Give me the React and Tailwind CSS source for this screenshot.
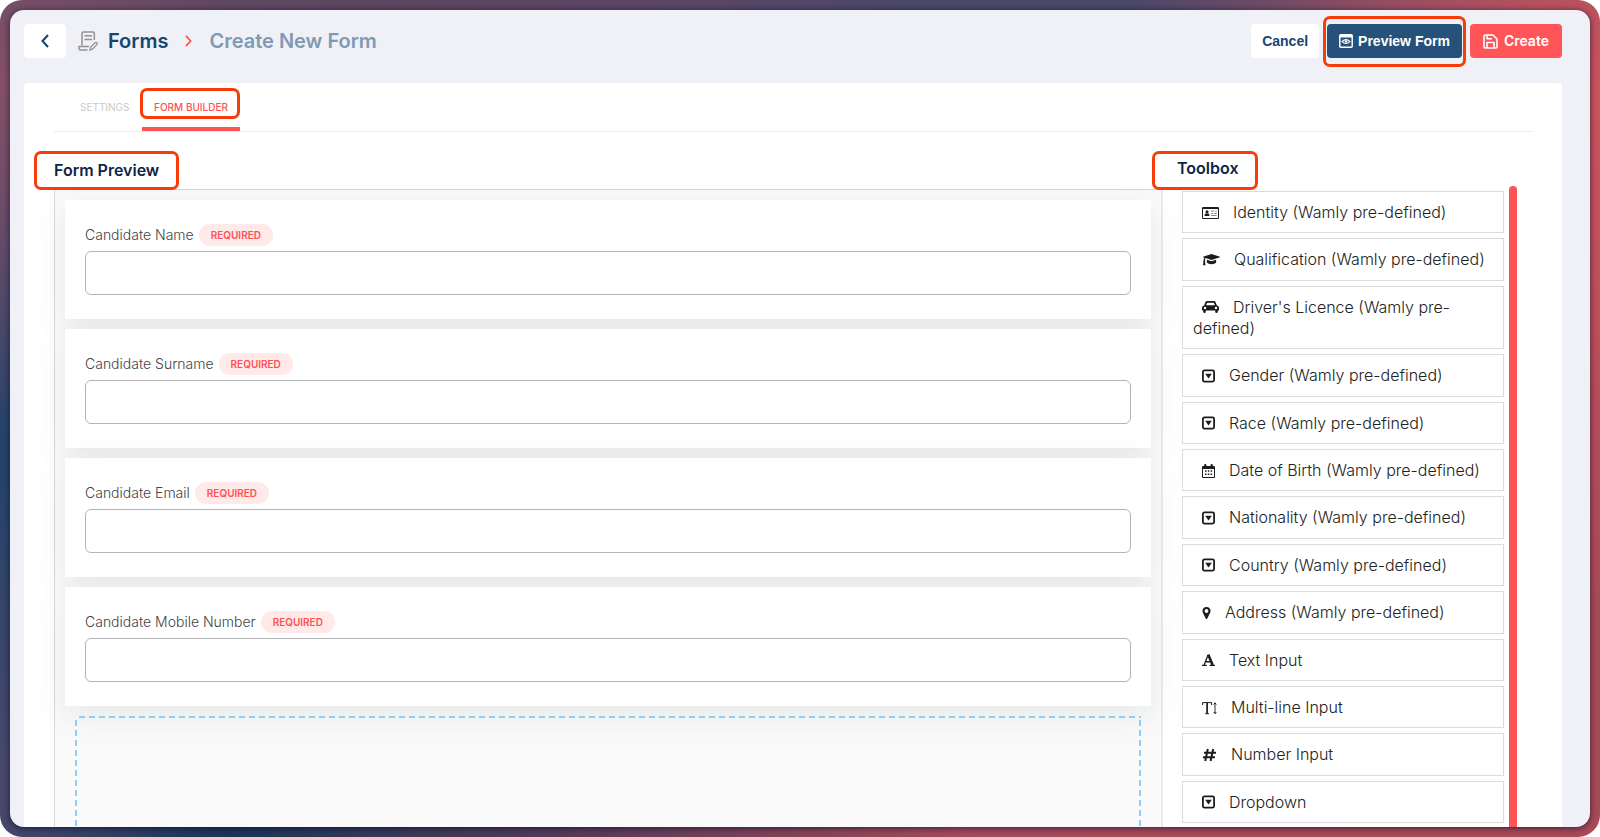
import { useState } from "react";

// ── Icons ─────────────────────────────────────────────────────────────────────

function FormIcon() {
  return (
    <svg className="w-5 h-5 text-[#929292]" viewBox="0 0 20 20" fill="none" stroke="currentColor" strokeWidth="1.5">
      <path d="M4 14.5V2.2Q4 1 5.2 1H15Q16.3 1 16.3 2.2V9" />
      <path d="M6.5 4.8H14M6.5 8.5H14" />
      <path d="M11 15.5H1V17.5Q1 19 2.5 19H9.5" />
      <path d="M12 19L12.6 16.2L17 11.8Q18 11 18.8 11.8Q19.6 12.6 18.8 13.6L14.5 18.2Z" strokeWidth="1.3" />
    </svg>
  );
}

function ChevronIcon({ flip, className }) {
  return (
    <svg className={className} viewBox="0 0 8 14" fill="none" stroke="currentColor" strokeWidth="2">
      <path d={flip ? "M7 1L1.5 7L7 13" : "M1 1L6.5 7L1 13"} />
    </svg>
  );
}

function PreviewIcon() {
  return (
    <svg className="w-[14px] h-[14px]" viewBox="0 0 14 14" fill="none" stroke="currentColor">
      <rect x="0.8" y="0.8" width="12.4" height="12.4" rx="1" strokeWidth="1.5" />
      <path d="M1 2.3H13" strokeWidth="2.4" />
      <path d="M3 7.6Q7 3.6 11 7.6Q7 11.4 3 7.6Z" strokeWidth="1.1" />
      <circle cx="7" cy="7.5" r="1.2" fill="currentColor" stroke="none" />
    </svg>
  );
}

function SaveIcon() {
  return (
    <svg className="w-[15px] h-[15px]" viewBox="0 0 15 15" fill="none" stroke="currentColor" strokeWidth="1.6" strokeLinejoin="round">
      <path d="M1 2.3Q1 1 2.3 1H10L14 5V12.7Q14 14 12.7 14H2.3Q1 14 1 12.7Z" />
      <path d="M4 14V8.5H11V14M4 1V4.8H9" />
    </svg>
  );
}

// Toolbox icons share a 14px height, each keeps its own width
const toolIcons = {
  card: (
    <svg className="inline w-[17px] h-[14px]" viewBox="0 0 17 14" fill="currentColor">
      <path fillRule="evenodd" d="M1.2 1H15.8Q17 1 17 2.2V11.8Q17 13 15.8 13H1.2Q0 13 0 11.8V2.2Q0 1 1.2 1ZM1 3V11.7Q1 12 1.3 12H15.7Q16 12 16 11.7V3Z" />
      <circle cx="5" cy="5.8" r="1.5" />
      <path d="M2.5 10Q2.5 7.4 4 7.2Q5 7.9 6 7.2Q7.5 7.4 7.5 10Z" />
      <path d="M9 4.8H12V5.6H9ZM13 4.8H14.7V5.6H13ZM9 6.9H11V7.7H9ZM12 6.9H14.7V7.7H12ZM9 9H14.7V9.8H9Z" opacity="0.7" />
    </svg>
  ),
  cap: (
    <svg className="inline w-[18px] h-[14px]" viewBox="0 0 18 14" fill="currentColor">
      <path d="M9.5 1L18 3.8Q18.3 4 18 4.2L9.5 7L3.6 5Q3 5.7 2.9 7.2Q3.6 7.8 3 8.5L3.5 12.3H1L1.5 8.5Q0.9 7.8 1.7 7.2Q1.7 5.7 2.3 4.6L1 4.2Q0.7 4 1 3.8Z" />
      <path d="M5 6.7L9.5 8.2L14 6.7L14.2 9.3Q13.5 11 9.5 11.2Q5.5 11 4.8 9.3Z" />
    </svg>
  ),
  car: (
    <svg className="inline w-[17px] h-[14px]" viewBox="0 0 17 14" fill="currentColor">
      <path
        fillRule="evenodd"
        d="M2.1 5.4L3.5 1.9Q4 1 5 1H12Q13 1 13.5 1.9L14.9 5.4Q17 5.7 17 7.6V10.2Q17 10.6 16.6 10.6H15.8V11.8Q15.8 13 14.5 13Q13.2 13 13.2 11.8V10.6H3.8V11.8Q3.8 13 2.5 13Q1.2 13 1.2 11.8V10.6H0.4Q0 10.6 0 10.2V7.6Q0 5.7 2.1 5.4ZM4.1 5.3H12.9L11.9 2.9Q11.8 2.7 11.5 2.7H5.5Q5.2 2.7 5.1 2.9ZM3 6.8A1.2 1.2 0 1 0 3 9.2A1.2 1.2 0 1 0 3 6.8ZM14 6.8A1.2 1.2 0 1 0 14 9.2A1.2 1.2 0 1 0 14 6.8Z"
      />
    </svg>
  ),
  select: (
    <svg className="inline w-[13px] h-[14px]" viewBox="0 0 13 14">
      <rect x="0.9" y="1.4" width="11.2" height="11.2" rx="1.5" fill="none" stroke="currentColor" strokeWidth="1.8" />
      <path d="M3.2 4.8H9.8L6.5 9.4Z" fill="currentColor" />
    </svg>
  ),
  calendar: (
    <svg className="inline w-[13px] h-[14px]" viewBox="0 0 13 14" fill="currentColor">
      <path fillRule="evenodd" d="M1 2H2.2V0.8Q2.2 0 3.3 0Q4.4 0 4.4 0.8V2H8.6V0.8Q8.6 0 9.7 0Q10.8 0 10.8 0.8V2H12Q13 2 13 3V13Q13 14 12 14H1Q0 14 0 13V3Q0 2 1 2ZM1 5V12.6Q1 13 1.4 13H11.6Q12 13 12 12.6V5Z" />
      <path d="M3 6.3H4.5V7.8H3ZM5.8 6.3H7.3V7.8H5.8ZM8.6 6.3H10.1V7.8H8.6ZM3 9.6H4.5V11.1H3ZM5.8 9.6H7.3V11.1H5.8ZM8.6 9.6H10.1V11.1H8.6Z" />
    </svg>
  ),
  marker: (
    <svg className="inline w-[9px] h-[14px]" viewBox="0 0 9 14" fill="currentColor">
      <path fillRule="evenodd" d="M4.5 1Q8.5 1.3 8.5 5Q8.5 6 8 7L5.3 12.5Q4.5 13.6 3.7 12.5L1 7Q0.5 6 0.5 5Q0.5 1.3 4.5 1ZM4.5 3.1A1.9 1.9 0 1 0 4.5 6.9A1.9 1.9 0 1 0 4.5 3.1Z" />
    </svg>
  ),
  font: (
    <svg className="inline w-[13px] h-[14px]" viewBox="0 0 13 14" fill="none" stroke="currentColor">
      <path d="M2.2 12L6 2" strokeWidth="1.3" />
      <path d="M6.2 1.5L10.6 12" strokeWidth="2.6" />
      <path d="M3.5 8.8H9M0 12.4H4.8M7.6 12.4H13" strokeWidth="1.4" />
    </svg>
  ),
  textHeight: (
    <svg className="inline w-[15px] h-[14px]" viewBox="0 0 15 14" fill="none" stroke="currentColor">
      <path d="M0.6 4V1.6H9.6V4M3.2 12.7H7" strokeWidth="1" />
      <path d="M5.1 1.6V12.7" strokeWidth="1.7" />
      <path d="M13 2V12.5M11.7 3.5L13 1.7L14.3 3.5M11.7 11L13 12.8L14.3 11" strokeWidth="0.9" />
    </svg>
  ),
  hash: (
    <svg className="inline w-[15px] h-[14px]" viewBox="0 0 15 14" fill="none" stroke="currentColor" strokeWidth="2">
      <path d="M5.8 1L3.2 13M11.2 1L8.6 13M2 4.8H14M1 9.2H13" />
    </svg>
  ),
};

// ── Data ──────────────────────────────────────────────────────────────────────

const fields = [
  { id: "name", label: "Candidate Name" },
  { id: "surname", label: "Candidate Surname" },
  { id: "email", label: "Candidate Email" },
  { id: "mobile", label: "Candidate Mobile Number" },
];

const tools = [
  { icon: "card", label: "Identity (Wamly pre-defined)" },
  { icon: "cap", label: "Qualification (Wamly pre-defined)" },
  { icon: "car", label: "Driver's Licence (Wamly pre-defined)" },
  { icon: "select", label: "Gender (Wamly pre-defined)" },
  { icon: "select", label: "Race (Wamly pre-defined)" },
  { icon: "calendar", label: "Date of Birth (Wamly pre-defined)" },
  { icon: "select", label: "Nationality (Wamly pre-defined)" },
  { icon: "select", label: "Country (Wamly pre-defined)" },
  { icon: "marker", label: "Address (Wamly pre-defined)" },
  { icon: "font", label: "Text Input" },
  { icon: "textHeight", label: "Multi-line Input" },
  { icon: "hash", label: "Number Input" },
  { icon: "select", label: "Dropdown" },
];

// ── Sub-components ────────────────────────────────────────────────────────────

// Hand-drawn style outline around the element it sits in
function Highlight({ className }) {
  return <span className={`absolute pointer-events-none border-3 border-[#f63c0b] rounded-[7px] ${className}`} />;
}

function Header() {
  return (
    <header className="flex items-center justify-between pt-[14px] pl-[14px] pr-7 shrink-0">
      <div className="flex items-center">
        <button aria-label="Back" className="w-[42px] h-[34px] flex items-center justify-center rounded bg-white text-[#17406f]">
          <ChevronIcon flip className="w-2 h-[14px]" />
        </button>
        <nav className="flex items-center ml-3 text-xl leading-8 font-semibold">
          <FormIcon />
          <a href="#forms" className="ml-[10px] text-[#17466f]">Forms</a>
          <ChevronIcon className="w-[7px] h-3 mx-[17px] text-[#ff4f52]" />
          <span className="text-[#7f9ab4]">Create New Form</span>
        </nav>
      </div>
      <div className="flex items-center gap-2 text-sm font-bold">
        <button className="h-[34px] px-[11px] rounded bg-white text-[#17466f] font-['Liberation_Sans',sans-serif]">
          Cancel
        </button>
        <div className="relative">
          <Highlight className="-inset-x-1 -top-2 -bottom-[9px]" />
          <button className="h-[34px] px-3 flex items-center gap-[5px] rounded bg-[#25517b] text-white font-['Liberation_Sans',sans-serif]">
            <PreviewIcon />
            Preview Form
          </button>
        </div>
        <button className="h-[34px] px-[13px] flex items-center gap-[6px] rounded bg-[#ff5558] text-white font-semibold">
          <SaveIcon />
          Create
        </button>
      </div>
    </header>
  );
}

function Tabs({ active, onChange }) {
  return (
    <div role="tablist" className="flex h-[49px] shrink-0 border-b border-[#ececec] pl-[26px] text-[10px]">
      <button role="tab" aria-selected={active === "settings"} onClick={() => onChange("settings")} className="w-[62px] text-left text-[#c9c9c9]">
        SETTINGS
      </button>
      <button role="tab" aria-selected={active === "builder"} onClick={() => onChange("builder")} className="relative w-[98px] border-b-4 border-[#ff5053] pt-1 font-medium text-[#ff5053]">
        FORM BUILDER
        <Highlight className="-left-[2px] right-0 top-[5px] bottom-2" />
      </button>
    </div>
  );
}

function FieldCard({ id, label }) {
  return (
    <div className="h-[119px] shrink-0 bg-white px-5 pt-6 shadow-[0_10px_30px_rgba(60,75,75,0.1)]">
      <div className="flex items-center gap-[5px]">
        <label htmlFor={id} className="text-sm leading-[22px] font-light text-[#444]">{label}</label>
        <span className="h-[22px] leading-[22px] px-3 rounded-full bg-[#ffe9e9] text-[10px] font-semibold text-[#ff5154]">
          REQUIRED
        </span>
      </div>
      <input id={id} type="text" className="block w-full h-11 mt-[5px] px-3 rounded-md border border-[#b4b4b4] bg-white" />
    </div>
  );
}

function FormPreview() {
  return (
    <section className="flex-1 min-w-0 flex flex-col">
      <h2 className="relative self-start h-[57px] pt-[26px] text-base leading-6 font-semibold text-[#0f2547]">
        Form Preview
        <Highlight className="-left-5 -right-5 top-[19px] -bottom-px" />
      </h2>
      <div className="flex-1 min-h-0 flex flex-col gap-[10px] px-[10px] pt-[10px] bg-[#fafafa] border-t border-l border-r-2 border-t-[#d6d6d6] border-l-[#d8d8d8] border-r-[#ebebeb]">
        {fields.map((f) => (
          <FieldCard key={f.id} {...f} />
        ))}
        <div className="relative flex-1 mx-[10px]">
          <svg className="absolute inset-0 w-full h-full text-[#8ccffa]" fill="none" stroke="currentColor" strokeWidth="4" strokeDasharray="6 4">
            <line x1="4" y1="0" x2="100%" y2="0" />
            <line x1="0" y1="4" x2="0" y2="100%" />
            <line x1="100%" y1="4" x2="100%" y2="100%" />
          </svg>
        </div>
      </div>
    </section>
  );
}

function Toolbox() {
  return (
    <aside className="w-[369px] shrink-0 flex flex-col">
      <h2 className="relative self-start h-[54px] ml-[14px] pt-6 text-base leading-6 font-semibold text-[#0f2547]">
        Toolbox
        <Highlight className="-left-[25px] -right-5 top-[19px] -bottom-1" />
      </h2>
      <div className="flex-1 min-h-0 flex gap-[5px] ml-[19px]">
        <ul className="w-[322px] flex flex-col gap-[5px] pt-[5px] pb-1 text-base leading-[21px] font-light text-[#222]">
          {tools.map((t) => (
            <li key={t.label} draggable className="grow border border-[#dcdcdc] bg-white px-[10px] pt-[10px] pb-[9px] cursor-move">
              <span className="inline-block ml-[9px] mr-[14px] -translate-y-px text-[#1c1c1c]">{toolIcons[t.icon]}</span>
              {t.label}
            </li>
          ))}
        </ul>
        <div className="w-2 rounded-t-full bg-[#ff5457]" />
      </div>
    </aside>
  );
}

// ── Main component ────────────────────────────────────────────────────────────

export default function App() {
  const [tab, setTab] = useState("builder");

  return (
    <div className="h-screen bg-white font-['Inter',sans-serif]">
      <div className="h-full p-[10px] rounded-[22px] bg-[radial-gradient(ellipse_50%_40%_at_0%_10%,#855066,transparent),radial-gradient(ellipse_30%_60%_at_100%_12%,#cc545d,transparent),radial-gradient(ellipse_60%_30%_at_68%_0%,#4b4769_20%,transparent),radial-gradient(ellipse_8%_35%_at_0%_55%,#24436a,transparent),linear-gradient(to_right,#47486c,#1a3557_14%,#5a3b58_37%,#a34a58_60%,#a84a58)]">
        <div className="h-full flex flex-col overflow-hidden rounded-[14px] bg-[#f0f1f6] shadow-[0_1px_6px_rgba(10,10,40,0.7)]">
          <Header />
          <main className="flex-1 min-h-0 flex flex-col mt-[25px] ml-[14px] mr-7 px-[30px] rounded-t bg-white">
            <Tabs active={tab} onChange={setTab} />
            <div className="flex-1 min-h-0 flex">
              <FormPreview />
              <Toolbox />
            </div>
          </main>
        </div>
      </div>
    </div>
  );
}
